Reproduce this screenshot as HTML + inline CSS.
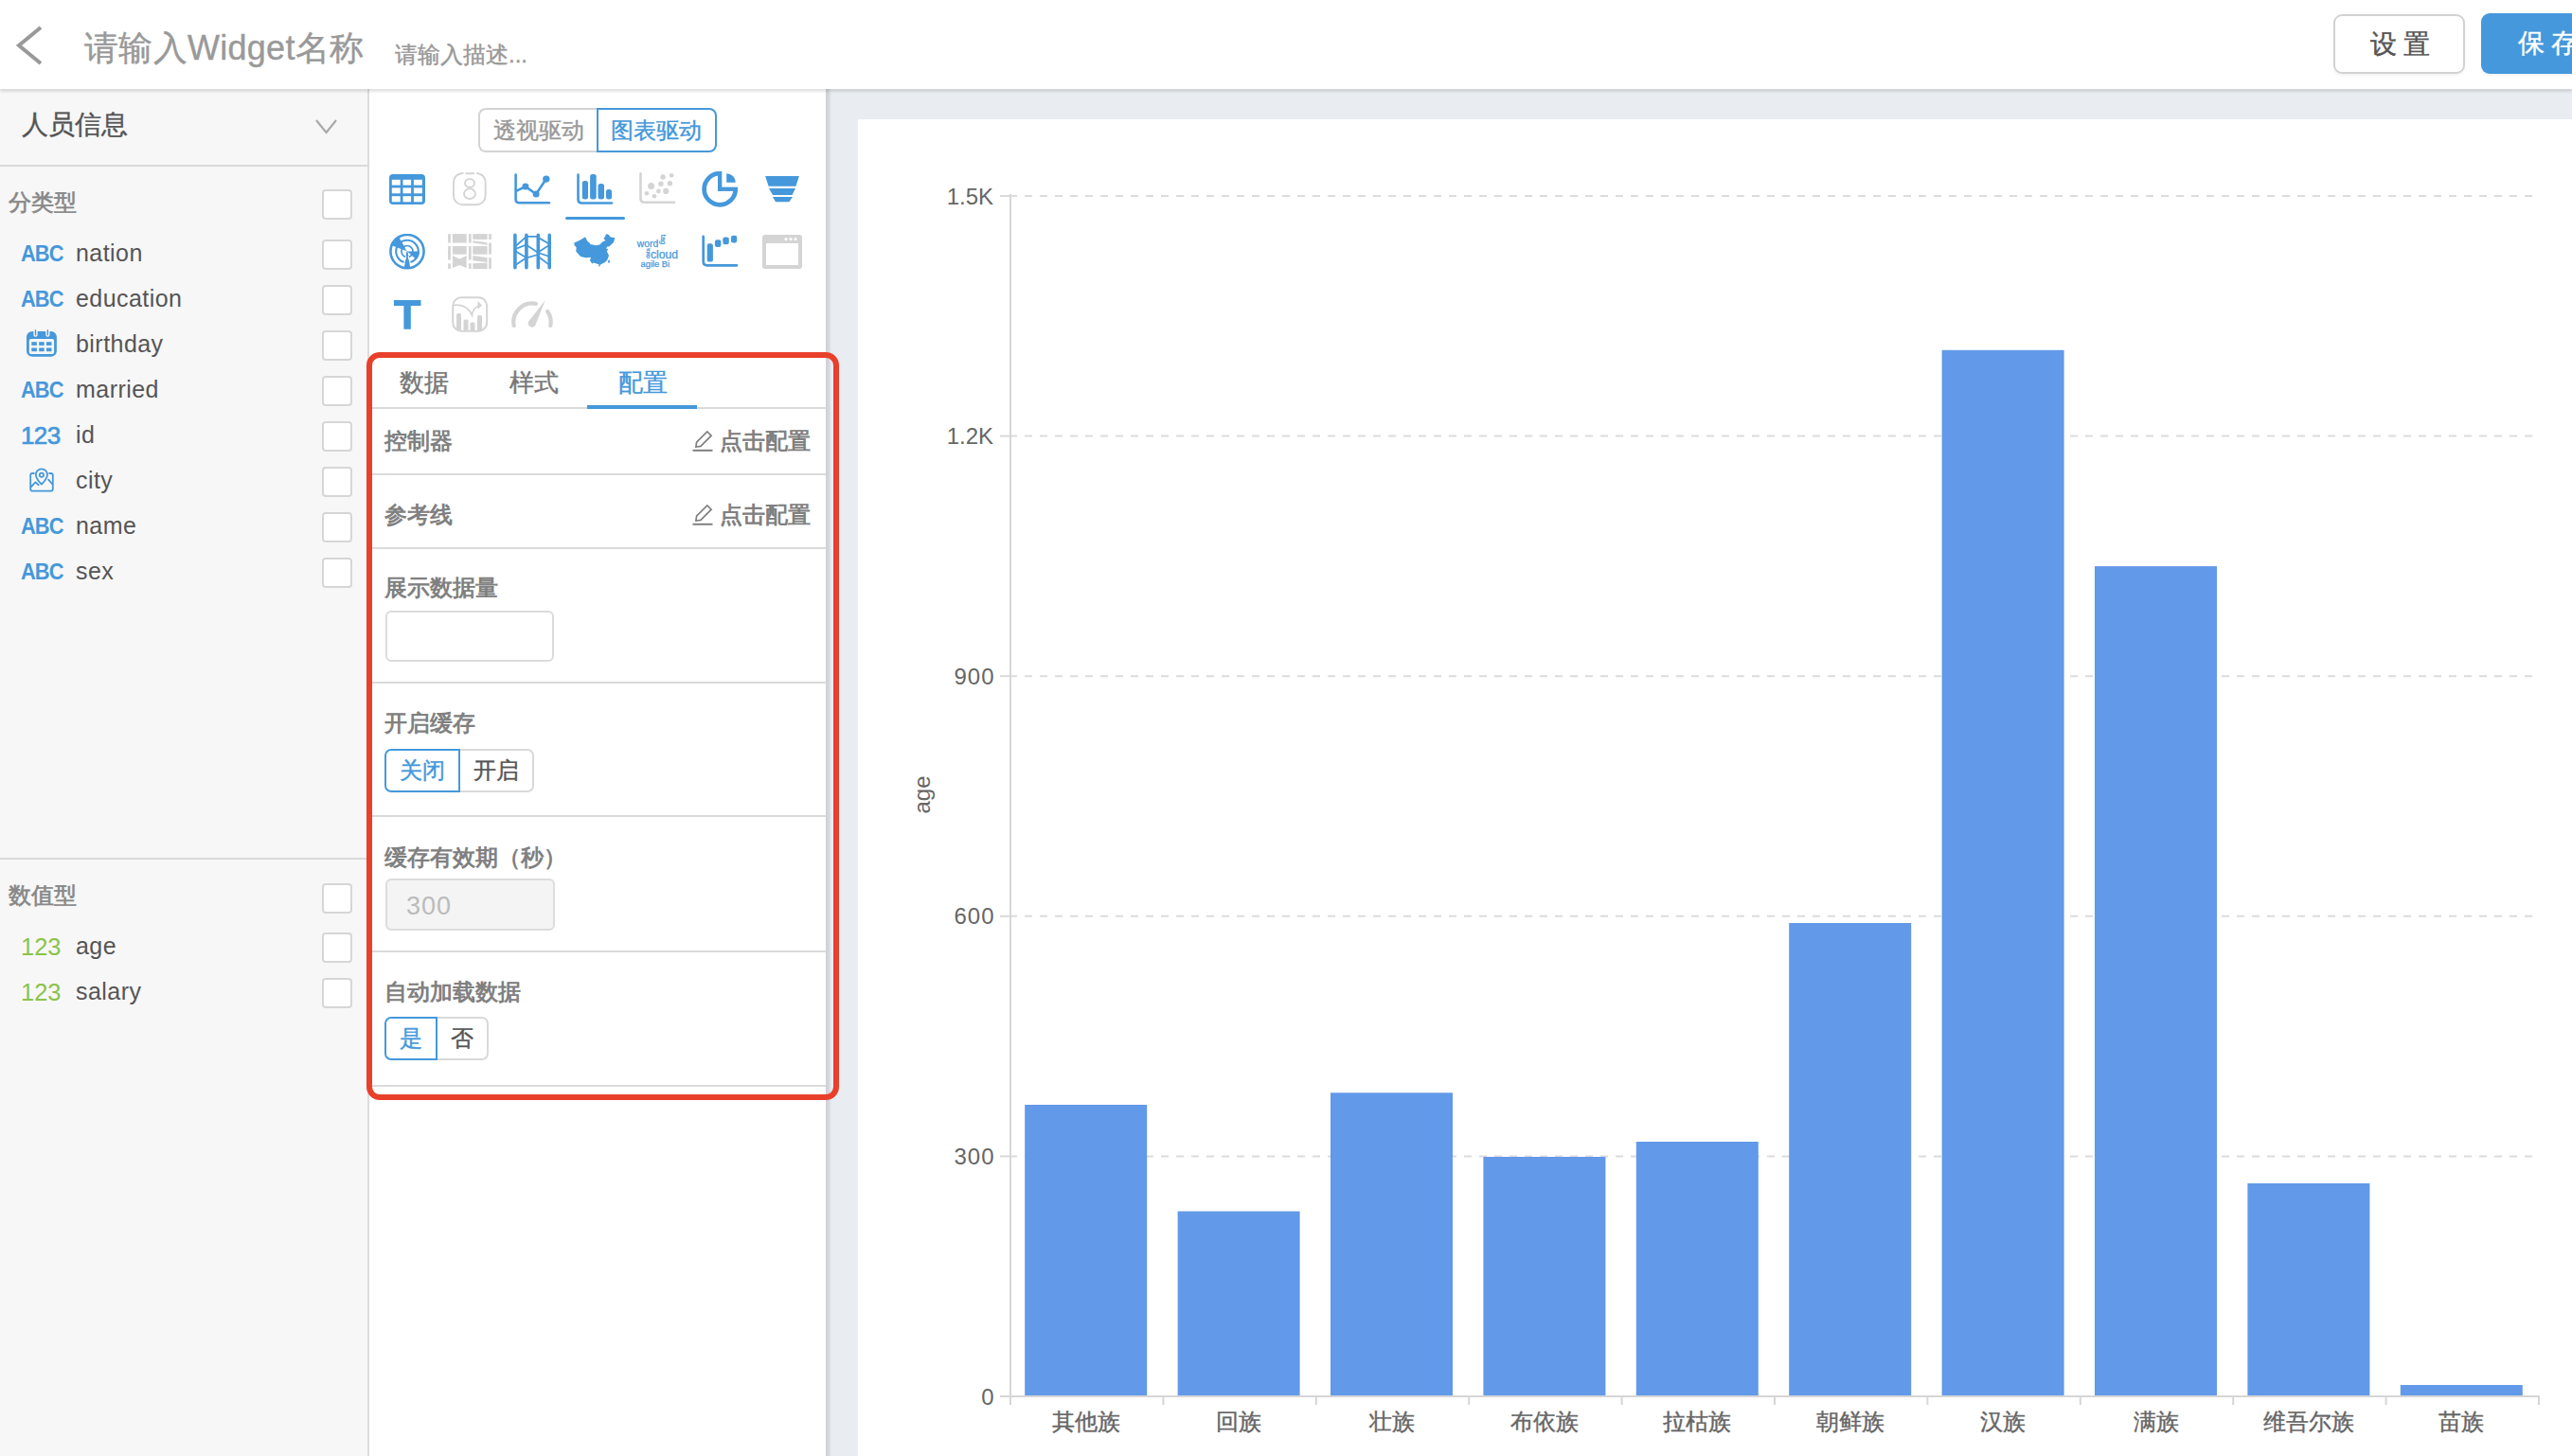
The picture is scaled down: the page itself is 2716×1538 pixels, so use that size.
<!DOCTYPE html>
<html><head><meta charset="utf-8">
<style>
*{box-sizing:border-box;margin:0;padding:0}
html,body{width:2716px;height:1538px;overflow:hidden;background:#e9ecf1;font-family:"Liberation Sans",sans-serif}
.a{position:absolute;white-space:nowrap}
.cj{-webkit-text-stroke:0.4px}
#hdr{position:absolute;left:0;top:0;width:2716px;height:94px;background:#fff;box-shadow:0 2.5px 2.5px rgba(0,0,0,.11);z-index:5}
#left{position:absolute;left:0;top:94px;width:390px;height:1444px;background:#f7f7f7;border-right:2px solid #dcdcdc}
#mid{position:absolute;left:390px;top:94px;width:482px;height:1444px;background:#fff}
#midsh{position:absolute;left:872px;top:94px;width:6px;height:1444px;background:linear-gradient(to right,#ced1d6 0%,#d3d6db 50%,#e9ecf1 100%)}
#card{position:absolute;left:906px;top:126px;width:1810px;height:1412px;background:#fff}
.cb{position:absolute;left:340px;width:32px;height:32px;border:2px solid #d6d6d6;border-radius:4px;background:#fff}
.fl{position:absolute;left:80px;font-size:25px;color:#555;line-height:30px;letter-spacing:0.45px;margin-top:-1px}
.ic{position:absolute;left:22px;font-size:23.5px;font-weight:bold;color:#4598db;line-height:30px;letter-spacing:-1px;transform:scaleX(0.93);transform-origin:0 0}
.num{position:absolute;left:22px;font-size:26px;color:#4598db;line-height:30px;letter-spacing:-0.6px;-webkit-text-stroke:0.7px}
.sec{position:absolute;left:9px;font-size:24px;color:#888;line-height:30px;-webkit-text-stroke:0.65px !important}
.div{position:absolute;left:0;height:2px;background:#dadada}
.lbl{position:absolute;left:406px;font-size:24px;font-weight:bold;color:#808080;line-height:30px}
.inp{position:absolute;left:407px;width:178px;height:54px;border:2px solid #dcdcdc;border-radius:6px;background:#fff}
.tg{position:absolute;height:46px;border:2px solid #d9d9d9;font-size:24px;line-height:42px;text-align:center;color:#555;background:#fff}
</style></head><body>
<div id="hdr">
  <svg class="a" style="left:0;top:0" width="100" height="94"><path d="M43 29 L20 48 L43 67" fill="none" stroke="#999" stroke-width="4"/></svg>
  <div class="a cj" style="left:89px;top:29px;font-size:36px;line-height:44px;color:#999;letter-spacing:0.3px">请输入Widget名称</div>
  <div class="a cj" style="left:417px;top:42.5px;font-size:24px;line-height:30px;color:#999">请输入描述...</div>
  <div class="a cj" style="left:2464px;top:15px;width:139px;height:63px;border:2px solid #d2d2d2;border-radius:9px;box-shadow:0 2px 3px rgba(0,0,0,.05);font-size:28px;line-height:60px;text-align:center;color:#555;letter-spacing:7px;text-indent:8px">设置</div>
  <div class="a cj" style="left:2620px;top:14px;width:200px;height:64px;border-radius:9px;background:#4598db;box-shadow:0 2px 3px rgba(0,0,0,.05);font-size:28px;line-height:64px;color:#fff;letter-spacing:7px;padding-left:39px">保存</div>
</div>

<div id="left"></div>
<div id="leftc">
<div class="a cj" style="left:23px;top:112px;font-size:28px;line-height:40px;color:#555">人员信息</div>
<svg class="a" style="left:330px;top:122px" width="30" height="24"><path d="M4 5 L14.5 18 L25 5" fill="none" stroke="#aaa" stroke-width="2.2"/></svg>
<div class="div" style="top:174px;width:389px;background:#dadada"></div>
<div class="sec cj" style="top:199px">分类型</div>
<div class="cb" style="top:200px"></div>
<div class="ic" style="top:253px">ABC</div>
<div class="fl" style="top:253px">nation</div>
<div class="cb" style="top:253px"></div>
<div class="ic" style="top:301px">ABC</div>
<div class="fl" style="top:301px">education</div>
<div class="cb" style="top:301px"></div>
<svg class="a" style="left:26px;top:346px" width="36" height="34"><rect x="2" y="3.9" width="31.9" height="26.9" rx="6" fill="#4598db"/><rect x="4.8" y="11.9" width="26.3" height="16.1" rx="2" fill="#f7f7f7"/><g fill="#4598db"><rect x="7.3" y="15.2" width="5.6" height="3.7"/><rect x="15.2" y="15.2" width="5.5" height="3.7"/><rect x="23" y="15.2" width="5.5" height="3.7"/><rect x="7.3" y="21.5" width="5.6" height="3.7"/><rect x="15.2" y="21.5" width="5.5" height="3.7"/><rect x="23" y="21.5" width="5.5" height="3.7"/></g><g fill="#4598db" stroke="#f7f7f7" stroke-width="1.4"><rect x="10.1" y="1.3" width="2.8" height="7.8" rx="1.4"/><rect x="23" y="1.3" width="2.8" height="7.8" rx="1.4"/></g></svg>
<div class="fl" style="top:349px">birthday</div>
<div class="cb" style="top:349px"></div>
<div class="ic" style="top:397px">ABC</div>
<div class="fl" style="top:397px">married</div>
<div class="cb" style="top:397px"></div>
<div class="num" style="top:445px">123</div>
<div class="fl" style="top:445px">id</div>
<div class="cb" style="top:445px"></div>
<svg class="a" style="left:30px;top:493px" width="30" height="28"><g fill="none" stroke="#4598db" stroke-width="1.8" stroke-linecap="round" stroke-linejoin="round"><path d="M5.8 7 L4.2 7 Q2.2 7 2.2 9 L2.2 23.5 Q2.2 25.7 4.4 25.7 L23.6 25.7 Q25.8 25.7 25.8 23.5 L25.8 9 Q25.8 7 23.8 7 L22.2 7"/><path d="M13.9 18.6 C10 14.5 7.8 11.5 7.8 8.4 A6.1 6.1 0 0 1 20 8.4 C20 11.5 17.8 14.5 13.9 18.6 Z"/><circle cx="13.9" cy="8.7" r="2.1"/><path d="M3 21 L7.5 16.4 L10.7 19.2 M21.2 13.6 L24.8 18"/></g></svg>
<div class="fl" style="top:493px">city</div>
<div class="cb" style="top:493px"></div>
<div class="ic" style="top:541px">ABC</div>
<div class="fl" style="top:541px">name</div>
<div class="cb" style="top:541px"></div>
<div class="ic" style="top:589px">ABC</div>
<div class="fl" style="top:589px">sex</div>
<div class="cb" style="top:589px"></div>
<div class="div" style="top:906px;width:389px;background:#dadada"></div>
<div class="sec cj" style="top:930.5px">数值型</div>
<div class="cb" style="top:933px"></div>
<div class="num" style="top:985px;color:#8bc34a;-webkit-text-stroke:0;letter-spacing:0;font-size:25.5px">123</div>
<div class="fl" style="top:985px">age</div>
<div class="cb" style="top:985px"></div>
<div class="num" style="top:1033px;color:#8bc34a;-webkit-text-stroke:0;letter-spacing:0;font-size:25.5px">123</div>
<div class="fl" style="top:1033px">salary</div>
<div class="cb" style="top:1033px"></div>
</div>

<div id="mid"></div><div id="midsh"></div>
<div id="midc">
<div class="a cj" style="left:505px;top:114px;width:127px;height:47px;border:2px solid #d4d4d4;border-right:none;border-radius:8px 0 0 8px;font-size:24px;line-height:43px;text-align:center;color:#999;padding-right:2px">透视驱动</div>
<div class="a cj" style="left:630px;top:114px;width:127px;height:47px;border:2px solid #4598db;border-radius:0 8px 8px 0;font-size:24px;line-height:43px;text-align:center;color:#4598db;padding-right:2px">图表驱动</div>
<svg class="a" style="left:411px;top:184px" width="38" height="32"><rect x="0" y="0" width="38" height="32" rx="4" fill="#4598db"/><g fill="#fff"><rect x="2.8" y="5.8" width="8.9" height="5.8"/><rect x="14.5" y="5.8" width="8.6" height="5.8"/><rect x="25.9" y="5.8" width="8.9" height="5.8"/><rect x="2.8" y="14.4" width="8.9" height="5.9"/><rect x="14.5" y="14.4" width="8.6" height="5.9"/><rect x="25.9" y="14.4" width="8.9" height="5.9"/><rect x="2.8" y="23.2" width="8.9" height="6.1"/><rect x="14.5" y="23.2" width="8.6" height="6.1"/><rect x="25.9" y="23.2" width="8.9" height="6.1"/></g></svg>
<svg class="a" style="left:478px;top:182px" width="37" height="37"><g fill="none" stroke="#d4d4d4" stroke-width="1.9" stroke-linecap="round"><path d="M10.7 0.95 L10.45 0.95 A9.5 9.5 0 0 0 0.95 10.45 L0.95 24.7 A9.5 9.5 0 0 0 10.45 34.2 L25.15 34.2 A9.5 9.5 0 0 0 34.65 24.7 L34.65 10.45 A9.5 9.5 0 0 0 25.15 0.95 L25.5 0.95"/><path d="M14.3 1.2 L22.3 1.2"/><ellipse cx="18" cy="11.4" rx="5" ry="4.4"/><ellipse cx="18" cy="22.7" rx="6" ry="5.4"/></g></svg>
<svg class="a" style="left:543px;top:183px" width="40" height="34"><g fill="none" stroke="#4598db" stroke-width="2.6" stroke-linecap="round"><path d="M1.6 1.5 L1.6 27.5 Q1.6 31.3 5.4 31.3 L37 31.3"/><path d="M2.5 18.7 L11.9 14.1 L23.1 22 L33.8 6.1"/></g><g fill="#4598db"><circle cx="11.9" cy="14.1" r="3.5"/><circle cx="23.1" cy="22" r="3.5"/><circle cx="33.8" cy="6.1" r="3.7"/></g></svg>
<svg class="a" style="left:609px;top:183px" width="40" height="34"><path d="M1.5 1.5 L1.5 27.5 Q1.5 31.5 5.5 31.5 L37 31.5" fill="none" stroke="#4598db" stroke-width="2.6" stroke-linecap="round"/><g fill="#4598db"><rect x="5.8" y="8" width="6.2" height="19.5" rx="2.5"/><rect x="14.1" y="1" width="6.6" height="26.5" rx="2.5"/><rect x="22.5" y="11" width="6.5" height="16.5" rx="2.5"/><rect x="31" y="17" width="6" height="10.5" rx="2.5"/></g></svg>
<div class="a" style="left:597px;top:229px;width:63px;height:3px;border-radius:2px;background:#4598db"></div>
<svg class="a" style="left:675px;top:182px" width="40" height="34"><path d="M1.5 1.3 L1.5 27.7 Q1.5 31.7 5.5 31.7 L37 31.7" fill="none" stroke="#d4d4d4" stroke-width="2.6" stroke-linecap="round"/><g fill="#d4d4d4"><circle cx="25.05" cy="4.95" r="2.7"/><circle cx="34.1" cy="3.3" r="2.3"/><circle cx="12.6" cy="14.4" r="3.5"/><circle cx="22.9" cy="12.3" r="2.7"/><circle cx="32.4" cy="11.7" r="2.7"/><circle cx="20.4" cy="19.9" r="2.3"/><circle cx="28.2" cy="19.9" r="3.1"/><circle cx="7.9" cy="22.2" r="2.3"/><circle cx="15.9" cy="25.2" r="2.3"/></g></svg>
<svg class="a" style="left:741px;top:181px" width="39" height="39"><path d="M19.15 2.2 A16.55 16.55 0 1 0 35.7 18.75" fill="none" stroke="#4598db" stroke-width="4.7"/><rect x="17" y="0" width="4.3" height="21" fill="#4598db"/><rect x="17" y="16.6" width="21.1" height="4.3" fill="#4598db"/><path d="M26.2 11.8 L26.2 2.2 A9.6 9.6 0 0 1 35.8 11.8 Z" fill="#4598db"/></svg>
<svg class="a" style="left:808px;top:186px" width="37" height="28"><g fill="#4598db"><path d="M0.1 0 L35.9 0 L32.4 10.8 L3.6 10.8 Z"/><path d="M4 12.9 L32 12.9 L28.5 19.9 L8 19.9 Z"/><path d="M8 22 L29 22 L25.4 27.2 L11 27.2 Z"/></g></svg>
<svg class="a" style="left:411px;top:247px" width="38" height="38"><g fill="none" stroke="#4598db"><circle cx="19" cy="18.6" r="17.6" stroke-width="2.6"/><circle cx="19" cy="18.6" r="11.8" stroke-width="2.1"/><circle cx="19" cy="18.6" r="6.1" stroke-width="1.7"/></g><path d="M19 18.6 L9.55 2.23 A18.9 18.9 0 0 0 1.36 11.83 Z" fill="#4598db"/><path d="M19 18.6 L32.00 18.60 A13 13 0 0 1 28.66 27.30 Z" fill="#4598db"/><path d="M18.4 18.6 L19.6 18.6 L22.3 37 L15.7 37 Z" fill="#4598db"/><path d="M17.8 23.6 L15.1 33.5 M20.2 23.6 L22.9 33.5" stroke="#fff" stroke-width="1.1"/><path d="M18.7 18.3 L17.00 15.14" stroke="#fff" stroke-width="0.8"/></svg>
<svg class="a" style="left:473px;top:247px" width="47" height="38"><g fill="#d4d4d4"><rect x="0.1" y="0.1" width="2.8" height="9.4"/><rect x="0.1" y="13" width="2.8" height="14.6"/><rect x="0.1" y="31.3" width="2.8" height="5.6"/><rect x="21.9" y="0.1" width="2.8" height="9.4"/><rect x="21.9" y="13" width="2.8" height="14.6"/><rect x="21.9" y="31.3" width="2.8" height="5.6"/><rect x="43.1" y="0.1" width="2.8" height="5.8"/><rect x="43.1" y="9.5" width="2.8" height="12.2"/><rect x="43.1" y="25.2" width="2.8" height="11.7"/><rect x="4.9" y="0.1" width="14.8" height="9.4"/><rect x="4.9" y="13" width="14.8" height="8.7"/><path d="M4.9 23 L12.3 26.5 L19.7 23 L19.7 28.9 L18.7 29.6 L19.7 30.3 L19.7 36 L12.3 32.9 L4.9 36 L4.9 30.3 L5.9 29.6 L4.9 28.9 Z"/><rect x="26.3" y="0.1" width="15.3" height="5.8"/><path d="M26.3 7.2 L41.6 9.2 L41.6 11.8 L26.3 9.5 Z"/><rect x="26.3" y="13" width="15.3" height="8.7"/><path d="M26.3 23 L41.6 25 L41.6 29.9 L26.3 28.3 Z"/><path d="M26.3 31.3 L41.6 30.6 L41.6 36.9 L26.3 36.9 Z"/></g></svg>
<svg class="a" style="left:541px;top:246px" width="42" height="40"><g stroke="#4598db" stroke-linecap="round" fill="none"><path d="M14.9 3.9 L27.3 3.9 M2.9 14.5 L14.9 3.9 M2.9 17.1 L14.9 12.5 M2.9 19.1 L14.9 26.3 M2.9 34.2 L14.9 26.3 M14.9 12.8 L27.3 21 M14.9 26.3 L27.3 23 M27.3 4.9 L39.2 11.8 M27.3 20.4 L39.2 12.8 M27.3 21 L39.2 25 M27.3 25 L39.2 33.9 " stroke-width="1.8"/><path d="M2.9 2.4 L2.9 36.7 M14.9 2.4 L14.9 36.7 M27.3 2.4 L27.3 36.7 M39.2 2.4 L39.2 36.7" stroke-width="3.6"/></g></svg>
<svg class="a" style="left:606px;top:247px" width="45" height="36"><polygon points="0.4,9.6 6.7,6.5 12.1,3.3 14.3,7.8 16.5,9.6 17.4,11 23.2,12.3 27.2,11.4 29.9,8.7 33.5,6.9 31.3,5.1 33,2.9 33.9,0.2 36.6,0.7 38.4,3.3 43.3,4.2 42,9.1 37.1,13.6 35.7,13.2 34,15.4 36.2,15.9 34.8,18.5 37,23 35.3,27.5 33,30.1 28.1,32.4 27.2,34.6 25.9,34.2 26.8,32.4 21,30.6 19.2,31.5 17,28.3 17.9,24.8 12.5,25.2 7.1,23.9 2.2,18.5 2.7,14.5 0.4,11.8" fill="#4598db"/><ellipse cx="37" cy="29.3" rx="0.9" ry="1.7" fill="#4598db"/></svg>
<svg class="a" style="left:672px;top:246px" width="46" height="40"><g fill="#4598db" stroke="#4598db" stroke-width="0.25" font-family="Liberation Sans"><text x="0.8" y="14.5" font-size="10.3">word</text><text x="15" y="26.9" font-size="12.2">cloud</text><text x="4.6" y="36" font-size="9.3">agile Bi</text><text x="0" y="0" font-size="7.5" transform="translate(25.5 1.8) rotate(90)">tag</text><text x="0" y="0" font-size="5.5" transform="translate(14 27) rotate(-90)">data</text></g></svg>
<svg class="a" style="left:741px;top:248px" width="39" height="35"><path d="M1.7 1.8 L1.7 28.3 Q1.7 32.3 5.7 32.3 L37 32.3" fill="none" stroke="#4598db" stroke-width="2.7" stroke-linecap="round"/><g fill="#4598db"><rect x="5.7" y="9.2" width="6.2" height="19.4" rx="2.2"/><rect x="13.9" y="5.3" width="6.5" height="7.7" rx="2.2"/><rect x="22.3" y="2.6" width="6.5" height="7.7" rx="2.2"/><rect x="31" y="0.7" width="6.2" height="7.7" rx="2.2"/></g></svg>
<svg class="a" style="left:805px;top:248px" width="42" height="37"><rect x="0" y="0" width="42" height="36" rx="3" fill="#d4d4d4"/><rect x="4" y="9" width="34" height="23" fill="#fff"/><g fill="#fff"><circle cx="25" cy="4.6" r="1.6"/><circle cx="30" cy="4.6" r="1.6"/><circle cx="35" cy="4.6" r="1.6"/></g></svg>
<svg class="a" style="left:415px;top:317px" width="30" height="32"><path d="M0.9 0 L29.5 0 L29.5 5.9 L18.8 5.9 L18.8 30.8 L11.4 30.8 L11.4 5.9 L0.9 5.9 Z" fill="#4598db"/></svg>
<svg class="a" style="left:477px;top:313px" width="39" height="38"><rect x="1.2" y="1.2" width="36" height="35.5" rx="9" fill="none" stroke="#d4d4d4" stroke-width="2"/><g fill="#d4d4d4"><rect x="5" y="18" width="5" height="18" rx="1.5"/><rect x="12.5" y="24.5" width="5" height="12" rx="1.5"/><rect x="19.5" y="27.5" width="5" height="9" rx="1.5"/><rect x="27" y="20" width="5" height="16.5" rx="1.5"/></g><path d="M1.5 9.5 C10 8 17 10 21.5 20 C22 14 25 11 30 9.5" fill="none" stroke="#d4d4d4" stroke-width="1.7"/><path d="M27.5 5 L32 9.5 L27.5 14 Z" fill="#d4d4d4"/></svg>
<svg class="a" style="left:540px;top:317px" width="46" height="32"><g fill="none" stroke="#d4d4d4" stroke-width="4.2"><path d="M2.66 26.96 A19.7 19.7 0 0 1 25.9 3.9" stroke-linecap="round"/><path d="M38.2 12.0 A19.7 19.7 0 0 1 41.3 26.9" stroke-linecap="round"/></g><path d="M35.8 0.1 L25.2 26.9 A4.2 4.2 0 0 1 18.0 22.7 Z" fill="#d4d4d4"/></svg>
<div class="a cj" style="left:422px;top:387px;font-size:26px;line-height:34px;color:#777">数据</div>
<div class="a cj" style="left:538px;top:387px;font-size:26px;line-height:34px;color:#777">样式</div>
<div class="a cj" style="left:653px;top:387px;font-size:26px;line-height:34px;color:#4598db">配置</div>
<div class="div" style="left:392px;top:430px;width:480px"></div>
<div class="a" style="left:620px;top:428px;width:116px;height:4px;background:#4598db"></div>
<div class="lbl" style="top:451px">控制器</div>
<svg class="a" style="left:731px;top:454px" width="24" height="24"><path d="M0.5 21.8 L21.5 21.8" stroke="#808080" stroke-width="2"/><path d="M4.6 13.1 L15.8 1.9 L20.1 6.2 L8.9 17.4 L3.9 18.1 Z" fill="none" stroke="#808080" stroke-width="1.7" stroke-linejoin="miter"/></svg>
<div class="a" style="left:760px;top:451px;font-size:24px;font-weight:bold;color:#808080;line-height:30px">点击配置</div>
<div class="div" style="left:392px;top:500px;width:480px"></div>
<div class="lbl" style="top:529px">参考线</div>
<svg class="a" style="left:731px;top:532px" width="24" height="24"><path d="M0.5 21.8 L21.5 21.8" stroke="#808080" stroke-width="2"/><path d="M4.6 13.1 L15.8 1.9 L20.1 6.2 L8.9 17.4 L3.9 18.1 Z" fill="none" stroke="#808080" stroke-width="1.7" stroke-linejoin="miter"/></svg>
<div class="a" style="left:760px;top:529px;font-size:24px;font-weight:bold;color:#808080;line-height:30px">点击配置</div>
<div class="div" style="left:392px;top:578px;width:480px"></div>
<div class="lbl" style="top:606px">展示数据量</div>
<div class="inp" style="top:645px"></div>
<div class="div" style="left:392px;top:720px;width:480px"></div>
<div class="lbl" style="top:749px">开启缓存</div>
<div class="tg cj" style="left:406px;top:791px;width:80px;border-color:#4598db;color:#4598db;border-radius:7px 0 0 7px;z-index:2">关闭</div>
<div class="tg cj" style="left:484px;top:791px;width:80px;border-radius:0 7px 7px 0">开启</div>
<div class="div" style="left:392px;top:861px;width:480px"></div>
<div class="lbl" style="top:891px">缓存有效期（秒）</div>
<div class="inp" style="top:928px;width:179px;height:55px;background:#f4f4f4;font-size:27px;line-height:55px;color:#bbb;padding-left:20px;letter-spacing:1px">300</div>
<div class="div" style="left:392px;top:1004px;width:480px"></div>
<div class="lbl" style="top:1033px">自动加载数据</div>
<div class="tg cj" style="left:406px;top:1074px;width:56px;border-color:#4598db;color:#4598db;border-radius:7px 0 0 7px;z-index:2">是</div>
<div class="tg cj" style="left:460px;top:1074px;width:56px;border-radius:0 7px 7px 0">否</div>
<div class="div" style="left:392px;top:1146px;width:480px"></div>
<div class="a" style="left:387px;top:372px;width:499px;height:790px;border:6px solid #e8402a;border-radius:14px;z-index:3"></div>
</div>

<div id="card"></div>
<div id="chart">
<svg class="a" style="left:0;top:0" width="2716" height="1538">
<text x="1050.5" y="1483.5" text-anchor="end" font-family="Liberation Sans" font-size="24" fill="#666" letter-spacing="1">0</text>
<line x1="1056" y1="1221.4" x2="1066" y2="1221.4" stroke="#d9d9d9" stroke-width="2"/>
<line x1="1066" y1="1221.4" x2="2681" y2="1221.4" stroke="#dcdcdc" stroke-width="2" stroke-dasharray="8 8"/>
<text x="1050.5" y="1229.9" text-anchor="end" font-family="Liberation Sans" font-size="24" fill="#666" letter-spacing="1">300</text>
<line x1="1056" y1="967.8" x2="1066" y2="967.8" stroke="#d9d9d9" stroke-width="2"/>
<line x1="1066" y1="967.8" x2="2681" y2="967.8" stroke="#dcdcdc" stroke-width="2" stroke-dasharray="8 8"/>
<text x="1050.5" y="976.3" text-anchor="end" font-family="Liberation Sans" font-size="24" fill="#666" letter-spacing="1">600</text>
<line x1="1056" y1="714.2" x2="1066" y2="714.2" stroke="#d9d9d9" stroke-width="2"/>
<line x1="1066" y1="714.2" x2="2681" y2="714.2" stroke="#dcdcdc" stroke-width="2" stroke-dasharray="8 8"/>
<text x="1050.5" y="722.7" text-anchor="end" font-family="Liberation Sans" font-size="24" fill="#666" letter-spacing="1">900</text>
<line x1="1056" y1="460.6" x2="1066" y2="460.6" stroke="#d9d9d9" stroke-width="2"/>
<line x1="1066" y1="460.6" x2="2681" y2="460.6" stroke="#dcdcdc" stroke-width="2" stroke-dasharray="8 8"/>
<text x="1049" y="469.1" text-anchor="end" font-family="Liberation Sans" font-size="24" fill="#666">1.2K</text>
<line x1="1056" y1="207.0" x2="1066" y2="207.0" stroke="#d9d9d9" stroke-width="2"/>
<line x1="1066" y1="207.0" x2="2681" y2="207.0" stroke="#dcdcdc" stroke-width="2" stroke-dasharray="8 8"/>
<text x="1049" y="215.5" text-anchor="end" font-family="Liberation Sans" font-size="24" fill="#666">1.5K</text>
<rect x="1082.2" y="1167" width="129" height="308.0" fill="#6299e8"/>
<rect x="1243.6" y="1279.5" width="129" height="195.5" fill="#6299e8"/>
<rect x="1405.0" y="1154.3" width="129" height="320.7" fill="#6299e8"/>
<rect x="1566.4" y="1222" width="129" height="253.0" fill="#6299e8"/>
<rect x="1727.8" y="1206" width="129" height="269.0" fill="#6299e8"/>
<rect x="1889.2" y="975" width="129" height="500.0" fill="#6299e8"/>
<rect x="2050.6" y="369.8" width="129" height="1105.2" fill="#6299e8"/>
<rect x="2212.0" y="598.1" width="129" height="876.9" fill="#6299e8"/>
<rect x="2373.4" y="1250" width="129" height="225.0" fill="#6299e8"/>
<rect x="2534.8" y="1463" width="129" height="12.0" fill="#6299e8"/>
<line x1="1067" y1="205" x2="1067" y2="1484" stroke="#d6d6d6" stroke-width="2"/>
<line x1="1056" y1="1475" x2="2682" y2="1475" stroke="#d6d6d6" stroke-width="2"/>
<line x1="1067.0" y1="1475" x2="1067.0" y2="1484" stroke="#d6d6d6" stroke-width="2"/>
<line x1="1228.4" y1="1475" x2="1228.4" y2="1484" stroke="#d6d6d6" stroke-width="2"/>
<line x1="1389.8" y1="1475" x2="1389.8" y2="1484" stroke="#d6d6d6" stroke-width="2"/>
<line x1="1551.2" y1="1475" x2="1551.2" y2="1484" stroke="#d6d6d6" stroke-width="2"/>
<line x1="1712.6" y1="1475" x2="1712.6" y2="1484" stroke="#d6d6d6" stroke-width="2"/>
<line x1="1874.0" y1="1475" x2="1874.0" y2="1484" stroke="#d6d6d6" stroke-width="2"/>
<line x1="2035.4" y1="1475" x2="2035.4" y2="1484" stroke="#d6d6d6" stroke-width="2"/>
<line x1="2196.8" y1="1475" x2="2196.8" y2="1484" stroke="#d6d6d6" stroke-width="2"/>
<line x1="2358.2" y1="1475" x2="2358.2" y2="1484" stroke="#d6d6d6" stroke-width="2"/>
<line x1="2519.6" y1="1475" x2="2519.6" y2="1484" stroke="#d6d6d6" stroke-width="2"/>
<line x1="2681.0" y1="1475" x2="2681.0" y2="1484" stroke="#d6d6d6" stroke-width="2"/>
<text x="1146.7" y="1510" text-anchor="middle" font-family="Liberation Sans" font-size="24" fill="#666" stroke="#666" stroke-width="0.4">其他族</text>
<text x="1308.1" y="1510" text-anchor="middle" font-family="Liberation Sans" font-size="24" fill="#666" stroke="#666" stroke-width="0.4">回族</text>
<text x="1469.5" y="1510" text-anchor="middle" font-family="Liberation Sans" font-size="24" fill="#666" stroke="#666" stroke-width="0.4">壮族</text>
<text x="1630.9" y="1510" text-anchor="middle" font-family="Liberation Sans" font-size="24" fill="#666" stroke="#666" stroke-width="0.4">布依族</text>
<text x="1792.3" y="1510" text-anchor="middle" font-family="Liberation Sans" font-size="24" fill="#666" stroke="#666" stroke-width="0.4">拉枯族</text>
<text x="1953.7" y="1510" text-anchor="middle" font-family="Liberation Sans" font-size="24" fill="#666" stroke="#666" stroke-width="0.4">朝鲜族</text>
<text x="2115.1" y="1510" text-anchor="middle" font-family="Liberation Sans" font-size="24" fill="#666" stroke="#666" stroke-width="0.4">汉族</text>
<text x="2276.5" y="1510" text-anchor="middle" font-family="Liberation Sans" font-size="24" fill="#666" stroke="#666" stroke-width="0.4">满族</text>
<text x="2437.9" y="1510" text-anchor="middle" font-family="Liberation Sans" font-size="24" fill="#666" stroke="#666" stroke-width="0.4">维吾尔族</text>
<text x="2599.3" y="1510" text-anchor="middle" font-family="Liberation Sans" font-size="24" fill="#666" stroke="#666" stroke-width="0.4">苗族</text>
<text x="0" y="0" text-anchor="middle" font-family="Liberation Sans" font-size="24" fill="#666" transform="translate(981.5 839.5) rotate(-90)">age</text>
</svg>
</div>


</body></html>
